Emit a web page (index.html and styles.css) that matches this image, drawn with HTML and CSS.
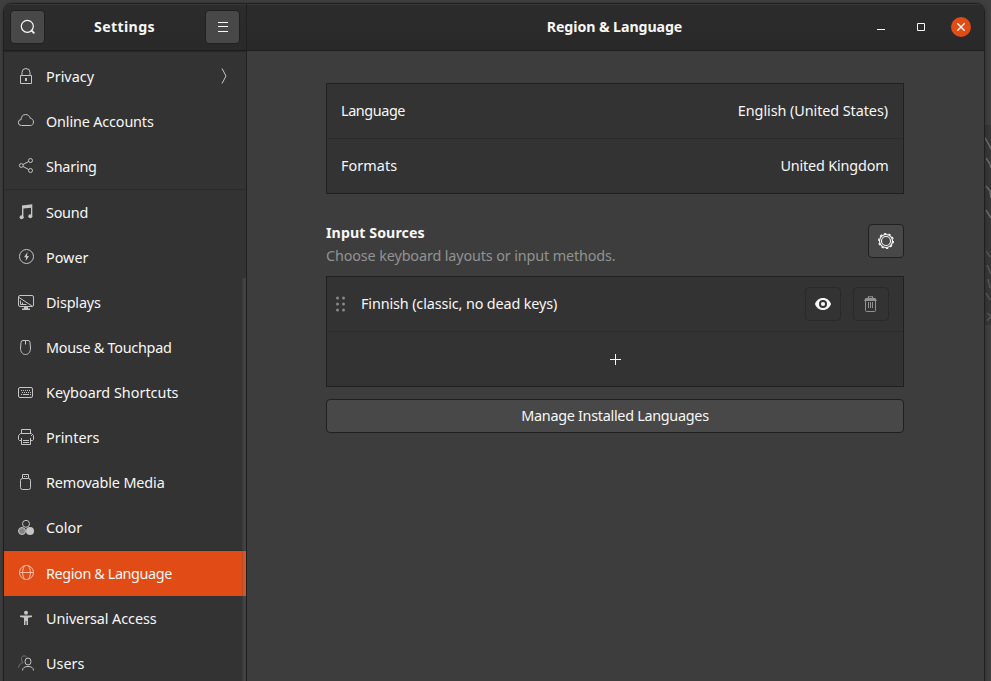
FILE: index.html
```html
<!DOCTYPE html>
<html lang="en">
<head>
<meta charset="utf-8">
<title>Settings</title>
<link rel="stylesheet" href="styles.css">
</head>
<body>
<svg class="wallpaper" viewBox="0 0 6 200"><path d="M0 13l3 5 3 6M1 33l4 6 1 4M1 61l4 5 1 7M1 85l5 8"/><path class="soft" d="M1 126l4 6M2 140l4 9M3 154l2 9M1 168l4 7M2 188l4 3-4 5"/></svg>
<div class="window">
  <aside class="sidebar">
    <header class="bar side-bar">
      <button class="btn hbtn" aria-label="Search"><svg class="ic" viewBox="0 0 16 16"><circle cx="7.300" cy="7.300" r="6" stroke-width="1.200"/><path d="M11.300 11.300l3 3" stroke-width="1.800"/></svg></button>
      <h1 class="title t-settings">Settings</h1>
      <button class="btn hbtn" aria-label="Menu"><svg class="ic" viewBox="0 0 16 16"><path d="M3 3.500h10M3 7.500h10M3 12.500h10"/></svg></button>
    </header>
    <nav class="nav">
      <a class="item"><svg class="ic" viewBox="0 0 16 16"><path d="M2.500 7.500h11v8h-11zM4 7V4.500a4 4 0 0 1 8 0V7"/><path class="f" d="M7 10h2v3H7z"/></svg><span>Privacy</span><svg class="ic chev" viewBox="0 0 16 16"><path d="M6 .5l4 7.500-4 7.500"/></svg></a>
      <a class="item"><svg class="ic" viewBox="0 0 16 16"><path d="M3.500 12.500a3 3 0 0 1-.3-6C3 4 4.500 1.700 7.500 1.500c2.500 0 4.200 1.500 4.800 3.800 1.800.3 3.200 1.700 3.200 3.700s-1.300 3.500-3 3.500z"/></svg><span class="w-online">Online Accounts</span></a>
      <a class="item"><svg class="ic" viewBox="0 0 16 16"><circle cx="3.300" cy="7.500" r="1.900"/><circle cx="12.500" cy="2.500" r="2"/><circle cx="12.500" cy="12.500" r="2"/><path d="M5 6.500l5.700-3M5 8.500l5.700 3"/></svg><span class="w-sharing">Sharing</span></a>
      <hr class="sep">
      <a class="item"><svg class="ic" viewBox="0 0 16 16"><path class="f" d="M4 1.500L14.300.300V12.500h-1.300V3.800L5.400 4.600V14H4z"/><circle class="f" cx="3.600" cy="13.300" r="2"/><circle class="f" cx="12.300" cy="12.200" r="2"/></svg><span class="w-sound">Sound</span></a>
      <a class="item"><svg class="ic" viewBox="0 0 16 16"><circle cx="8.500" cy="7.500" r="7"/><path class="f" d="M9.500 3L6 8.200h2L7.700 12 11 6.900H9z"/></svg><span>Power</span></a>
      <a class="item"><svg class="ic" viewBox="0 0 16 16"><rect x=".5" y="1.500" width="15" height="11" rx="1.500"/><path d="M1 3.500L14 12M2.500 6.500v4h6M4.500 8.500v2"/><path class="f" d="M6 13h4v1.500h2V16H4v-1.500h2z"/></svg><span class="w-displays">Displays</span></a>
      <a class="item"><svg class="ic" viewBox="0 0 16 16"><path d="M5 1.500h5q2 0 2 2l.5 5.500c0 4-2 6.500-5 6.500s-5-2.500-5-6.500L3 3.500q0-2 2-2zM7.500 2v3.500"/></svg><span class="w-mouse">Mouse &amp; Touchpad</span></a>
      <a class="item"><svg class="ic" viewBox="0 0 16 16"><rect x=".5" y="3.500" width="14" height="10" rx="1.500"/><path d="M3 6.500h10M4 8.500h9" stroke-dasharray="1 1"/><path d="M3 10.500h1M5 10.500h6M12 10.500h1"/></svg><span>Keyboard Shortcuts</span></a>
      <a class="item"><svg class="ic" viewBox="0 0 16 16"><path d="M3.500 4V.5h9V4M3 11.500H1.500l-1-1v-4l2-2h11l2 2v4l-1 1H13M3.500 9v6.500h9V9M5 11.500h6M5 13.500h6M13 6.500h1"/></svg><span>Printers</span></a>
      <a class="item"><svg class="ic" viewBox="0 0 16 16"><path d="M4.500 4V.5h6V4"/><path d="M6 2.500h1M8 2.500h1"/><rect x="2.500" y="4.500" width="10" height="11" rx="2"/></svg><span class="w-removable">Removable Media</span></a>
      <a class="item"><svg class="ic" viewBox="0 0 16 16"><circle cx="8" cy="4.800" r="3.500"/><circle class="grey" cx="4" cy="12" r="3.500"/><circle class="f" cx="12" cy="12" r="4"/></svg><span>Color</span></a>
      <hr class="sep">
      <a class="item selected"><svg class="ic" viewBox="0 0 16 16"><circle cx="8.500" cy="7.500" r="7"/><path d="M1.500 7.500h14M6.500.8c-2.500 4-2.500 9.500 0 13.400M10.500.8c2.500 4 2.500 9.500 0 13.400"/></svg><span class="w-region">Region &amp; Language</span></a>
      <a class="item"><svg class="ic" viewBox="0 0 16 16"><circle class="f" cx="8" cy="2.700" r="2"/><path class="f" d="M2 5.500h12V7l-4 .7V15H8.500v-4h-1v4H6V7.700L2 7z"/></svg><span class="w-universal">Universal Access</span></a>
      <a class="item"><svg class="ic" viewBox="0 0 16 16"><path class="dim" d="M8.500 2.500C8 .2 3.500.2 3.500 3.500c0 2 .7 3.300 1.500 4-2 .8-4 2-4.500 5"/><ellipse cx="10" cy="6.500" rx="3" ry="3.500"/><path d="M4.500 15.500c0-3 2.500-4 5.500-4s5.500 1 5.500 4"/></svg><span>Users</span></a>
    </nav>
    <div class="scroll"></div>
  </aside>
  <main class="main">
    <header class="bar main-bar">
      <h2 class="title t-region">Region &amp; Language</h2>
      <div class="controls">
        <svg class="ctl" viewBox="0 0 20 20"><path d="M6 12.500h8"/></svg>
        <svg class="ctl" viewBox="0 0 20 20"><path d="M6.500 6.500h7v7h-7z"/></svg>
        <svg class="ctl" viewBox="0 0 20 20"><circle class="close" cx="10" cy="10" r="10"/><path d="M6.300 6.300l7.400 7.400M13.700 6.300l-7.400 7.400" stroke-width="1.400"/></svg>
      </div>
    </header>
    <div class="content">
      <section class="list">
        <div class="row"><span class="w-language">Language</span><span class="w-english">English (United States)</span></div>
        <div class="row"><span class="w-formats">Formats</span><span class="w-uk">United Kingdom</span></div>
      </section>
      <div class="heading">
        <div>
          <h3 class="h w-input">Input Sources</h3>
          <p class="sub">Choose keyboard layouts or input methods.</p>
        </div>
        <button class="btn sq" aria-label="Options"><svg class="ic" viewBox="0 0 16 16"><circle cx="8" cy="8" r="4.500" stroke-width="1.100"/><circle cx="8" cy="8" r="6.500" stroke-width="1.200"/><circle cx="8" cy="8" r="7.400" stroke-width="1.200" stroke-dasharray="2.400 2.250"/></svg></button>
      </div>
      <section class="list">
        <div class="row source">
          <svg class="grip" viewBox="0 0 10 16"><circle cx="2.500" cy="2" r="1.500"/><circle cx="8.500" cy="2" r="1.500"/><circle cx="2.500" cy="8" r="1.500"/><circle cx="8.500" cy="8" r="1.500"/><circle cx="2.500" cy="14" r="1.500"/><circle cx="8.500" cy="14" r="1.500"/></svg>
          <span class="w-finnish">Finnish (classic, no dead keys)</span>
          <button class="btn sq flat push" aria-label="Preview"><svg class="ic" viewBox="0 0 16 16"><path class="f" fill-rule="evenodd" d="M8 2C4 2 1 4.700 0 8c1 3.300 4 6 8 6s7-2.700 8-6c-1-3.300-4-6-8-6zm0 2a4 4 0 1 1 0 8 4 4 0 0 1 0-8z"/><circle class="f" cx="8" cy="8" r="2.100"/></svg></button>
          <button class="btn sq flat off" aria-label="Remove"><svg class="ic" viewBox="0 0 16 16"><path d="M2.500 5v9.500q0 1 1 1h8q1 0 1-1V5M5.500 6v6M7.500 6v6M9.500 6v6"/><path class="f" d="M1 5l1.500-3h2.300V.2h5.400V2h2.300L14 5zM6 1.200V2h3v-.8z" fill-rule="evenodd"/></svg></button>
        </div>
        <div class="row add"><svg class="ic" viewBox="0 0 16 16"><path d="M8.500 3v11M3 8.500h11"/></svg></div>
      </section>
      <button class="btn manage"><span class="w-manage">Manage Installed Languages</span></button>
    </div>
  </main>
</div>
</body>
</html>
```
FILE: styles.css
```css
* { box-sizing: border-box; margin: 0; }
html, body { height: 681px; overflow: hidden; }
body {
  position: relative;
  background: #404040;
  padding: 3px 6px 0 3px;
  color: #f7f7f7;
  font: 14.4px/20px "Noto Sans", "Open Sans", sans-serif;
}
.wallpaper {
  position: absolute;
  right: 0;
  top: 125px;
  width: 6px;
  height: 200px;
  fill: none;
  stroke: #6c6c6c;
  stroke-width: 1.5;
  background: #373737;
}
.wallpaper .soft { stroke: #575757; }
.window {
  position: relative;
  display: flex;
  height: 690px;
  border: 1px solid #202020;
  border-radius: 9px 9px 0 0;
  background: #3d3d3d;
  box-shadow: 0 0 5px rgba(0,0,0,.3);
  overflow: hidden;
}
.window span, .title, .h, .sub { white-space: nowrap; }
.bar {
  display: flex;
  height: 47px;
  border-bottom: 1px solid #1f1f1f;
  box-shadow: inset 0 1px #383838;
  background: linear-gradient(#2c2c2c, #292929);
}
.title { font-size: 14.2px; font-weight: 700; line-height: 20px; }
.sidebar {
  position: relative;
  width: 243px;
  border-right: 1px solid #202020;
  background: #333;
}
.side-bar { justify-content: space-between; align-items: center; padding: 0 6px; }
.nav { border-top: 1px solid #272727; padding-top: 2px; }
.item { display: flex; align-items: center; height: 45px; padding: 0 14px; }
.item span { margin-left: 12px; }
.item .ic { margin-bottom: 1px; color: #c5c5c5; }
.item .chev { margin: 0 0 1px auto; }
.selected { background: #e04b16; }
.item.selected .ic { color: #ffc0a5; }
.sep { height: 1px; border: 0; background: #2b2b2b; }
.scroll {
  position: absolute;
  right: 0;
  top: 274px;
  bottom: 0;
  width: 4px;
  border-left: 1px solid rgba(0,0,0,.12);
  background: rgba(140,140,140,.18);
}
.ic { display: block; flex: none; width: 16px; height: 16px; }
.ic, .ctl { fill: none; stroke: currentColor; stroke-width: 1; overflow: visible; }
.f { fill: currentColor; stroke: none; }
.grey { fill: #858585; }
.dim { stroke: #777; }
.btn {
  display: flex;
  align-items: center;
  justify-content: center;
  padding: 0;
  border: 1px solid #202020;
  border-radius: 4px;
  background: #484848;
  color: #f7f7f7;
  font: inherit;
}
.hbtn { width: 35px; height: 34px; }
.sq { width: 36px; height: 34px; }
.flat { border-color: #292929; background: #333; }
.off { color: #929292; }
.main { flex: 1; }
.main-bar { position: relative; align-items: center; justify-content: center; }
.controls { position: absolute; right: 13px; top: 13px; display: flex; gap: 20px; }
.ctl { display: block; width: 20px; height: 20px; }
.close { fill: #e04b16; stroke: none; }
.content { width: 578px; margin: 32px 0 0 79px; }
.list { border: 1px solid #202020; background: #333; }
.row { display: flex; align-items: center; justify-content: space-between; height: 54px; padding: 0 14px; }
.row + .row { height: 55px; border-top: 1px solid #2c2c2c; }
.heading { display: flex; justify-content: space-between; align-items: flex-start; height: 82px; }
.heading .sq { margin-top: 30px; }
.heading > div { padding-top: 28px; }
.h { font-size: 14.2px; line-height: 22px; }
.sub { line-height: 24px; color: #929292; letter-spacing: -.135px; }
.source { justify-content: flex-start; padding-left: 8px; }
.grip { width: 10px; height: 16px; margin-right: 16px; fill: #888; }
.push { margin: 0 12px 0 auto; }
.row.add { justify-content: center; }
.manage { width: 100%; height: 34px; margin-top: 12px; }

/* Label tracking */
.t-settings { margin-right: 1px; letter-spacing: .35px; }
.t-region { margin-right: 2px; letter-spacing: -.08px; }
.w-input { letter-spacing: .08px; }
.w-language { letter-spacing: -.4px; }
.w-english { margin-right: 1px; letter-spacing: -.07px; }
.w-uk { margin-right: .5px; letter-spacing: -.17px; }
.w-formats { letter-spacing: .07px; }
.w-finnish { letter-spacing: -.13px; }
.w-manage { letter-spacing: -.29px; }
.w-region { letter-spacing: -.39px; }
.w-online { letter-spacing: -.15px; }
.w-sharing { letter-spacing: -.22px; }
.w-sound { letter-spacing: -.25px; }
.w-displays { letter-spacing: -.15px; }
.w-mouse { letter-spacing: -.27px; }
.w-removable { letter-spacing: -.13px; }
.w-universal { letter-spacing: -.08px; }
```
